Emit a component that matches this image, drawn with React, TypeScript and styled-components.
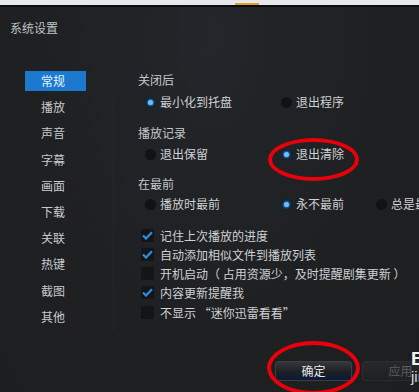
import React from "react";
import styled, { createGlobalStyle } from "styled-components";

const Global = createGlobalStyle`
  html, body { margin: 0; padding: 0; background: #1e2022; }
  body { font-family: "Noto Sans CJK SC", "Noto Sans", sans-serif; }
`;

const Page = styled.div`
  position: relative;
  width: 419px;
  height: 392px;
  overflow: hidden;
  background: radial-gradient(ellipse at 50% 10%, #23262a 0%, #1e2022 60%, #1c1e20 100%);
  color: #d2d2d2;
  font-size: 12px;
`;

const TopStrip = styled.div`
  height: 5px;
  background: #e6e8ec;
  display: flex;
  align-items: flex-end;
`;

const Accent = styled.div`
  margin-left: 235px;
  width: 24px;
  height: 2px;
  background: #e0a020;
`;

const EdgeLine = styled.div`
  height: 2px;
  background: #0c0d0e;
`;

const TitleBar = styled.div`
  height: 42px;
  padding-left: 10px;
  display: flex;
  align-items: flex-start;
  padding-top: 13px;
  box-sizing: border-box;
  color: #bfc3c7;
  font-size: 12px;
  line-height: 16px;
`;

const Body = styled.div`
  display: flex;
  padding-top: 22px;
  height: 280px;
`;

const Sidebar = styled.div`
  flex: none;
  width: 88px;
  padding-left: 25px;
  display: flex;
  flex-direction: column;
  gap: 6.2px;
  border-right: 1px solid #25282b;
  margin-bottom: 20px;
`;

const NavItem = styled.div<{ $active?: boolean }>`
  width: 61px;
  height: 20px;
  box-sizing: border-box;
  padding-left: 16px;
  line-height: 20px;
  color: ${(p) => (p.$active ? "#e8f2fc" : "#c8cacc")};
  background: ${(p) => (p.$active ? "#1b7ad0" : "transparent")};
`;

const Content = styled.div`
  flex: 1;
  min-width: 0;
  padding-left: 24px;
  display: flex;
  flex-direction: column;
`;

const SectionLabel = styled.div<{ $mt: number }>`
  margin-top: ${(p) => p.$mt}px;
  height: 16px;
  line-height: 16px;
  color: #c6c8ca;
`;

const RadioRow = styled.div<{ $mt: number }>`
  margin-top: ${(p) => p.$mt}px;
  padding-left: 7px;
  display: grid;
  grid-template-columns: 136px 95px 100px;
  height: 16px;
  white-space: nowrap;
`;

const RadioOption = styled.div`
  display: flex;
  align-items: center;
  gap: 4px;
  color: #cfd1d3;
  line-height: 16px;
`;

const RadioDot = styled.span<{ $on?: boolean }>`
  width: 11px;
  height: 11px;
  border-radius: 50%;
  background: #111214;
  box-sizing: border-box;
  display: flex;
  align-items: center;
  justify-content: center;
  flex: none;
  &::after {
    content: "";
    display: ${(p) => (p.$on ? "block" : "none")};
    width: 5px;
    height: 5px;
    border-radius: 50%;
    background: #6cc0ff;
    box-shadow: 0 0 3px 1px #2b8de8;
  }
`;

const CheckList = styled.div`
  margin-top: 15px;
  display: flex;
  flex-direction: column;
  gap: 3.3px;
  padding-left: 3px;
`;

const CheckRow = styled.div`
  display: flex;
  align-items: center;
  gap: 6px;
  height: 16px;
  color: #cfd1d3;
  white-space: nowrap;
`;

const Box = styled.span`
  width: 13px;
  height: 13px;
  background: #141517;
  display: flex;
  align-items: center;
  justify-content: center;
  flex: none;
`;

const Footer = styled.div`
  display: flex;
  gap: 10px;
  padding-left: 275px;
  padding-top: 10px;
`;

const Button = styled.div<{ $disabled?: boolean }>`
  width: 77px;
  height: 20px;
  flex: none;
  box-sizing: border-box;
  border: 1px solid ${(p) => (p.$disabled ? "#2a2c2e" : "#3b3e42")};
  border-radius: 3px;
  text-align: center;
  line-height: 18px;
  font-size: 12px;
  color: ${(p) => (p.$disabled ? "#5a5d60" : "#e6e8ea")};
  background: ${(p) =>
    p.$disabled
      ? "linear-gradient(#262829, #1e2021)"
      : "linear-gradient(#34373b 0%, #1c1f24 55%, #0c1a36 100%)"};
`;

const Annotation = styled.div<{ $x: number; $y: number; $w: number; $h: number }>`
  position: absolute;
  left: ${(p) => p.$x}px;
  top: ${(p) => p.$y}px;
  width: ${(p) => p.$w}px;
  height: ${(p) => p.$h}px;
  box-sizing: border-box;
  border: 4px solid #e8000a;
  border-radius: 50%;
  pointer-events: none;
`;

const Watermark = styled.div`
  position: absolute;
  left: 411px;
  top: 349px;
  color: #f2f2f2;
  font-family: "Liberation Sans", sans-serif;
  line-height: 1;
  display: flex;
  flex-direction: column;
`;

const WmBig = styled.span`
  font-size: 19px;
  font-weight: bold;
`;

const WmSmall = styled.span`
  font-size: 15px;
  color: #d8d8d8;
  margin-top: 1px;
`;

const Check = () => (
  <svg width="11" height="9" viewBox="0 0 11 9">
    <path d="M1 4.5 L4 7.5 L10 1.2" fill="none" stroke="#2a90e6" strokeWidth="2.2" />
  </svg>
);

const nav = ["常规", "播放", "声音", "字幕", "画面", "下载", "关联", "热键", "截图", "其他"];

const checks: [boolean, string][] = [
  [true, "记住上次播放的进度"],
  [true, "自动添加相似文件到播放列表"],
  [false, "开机启动（ 占用资源少，及时提醒剧集更新 ）"],
  [true, "内容更新提醒我"],
  [false, "不显示 “迷你迅雷看看”"],
];

export default function App() {
  return (
    <Page>
      <Global />
      <TopStrip>
        <Accent />
      </TopStrip>
      <EdgeLine />
      <TitleBar>系统设置</TitleBar>
      <Body>
        <Sidebar>
          {nav.map((n, i) => (
            <NavItem key={n} $active={i === 0}>
              {n}
            </NavItem>
          ))}
        </Sidebar>
        <Content>
          <SectionLabel $mt={1}>关闭后</SectionLabel>
          <RadioRow $mt={6}>
            <RadioOption>
              <RadioDot $on />
              最小化到托盘
            </RadioOption>
            <RadioOption>
              <RadioDot />
              退出程序
            </RadioOption>
          </RadioRow>
          <SectionLabel $mt={15}>播放记录</SectionLabel>
          <RadioRow $mt={5}>
            <RadioOption>
              <RadioDot />
              退出保留
            </RadioOption>
            <RadioOption>
              <RadioDot $on />
              退出清除
            </RadioOption>
          </RadioRow>
          <SectionLabel $mt={14}>在最前</SectionLabel>
          <RadioRow $mt={4}>
            <RadioOption>
              <RadioDot />
              播放时最前
            </RadioOption>
            <RadioOption>
              <RadioDot $on />
              永不最前
            </RadioOption>
            <RadioOption>
              <RadioDot />
              总是最前
            </RadioOption>
          </RadioRow>
          <CheckList>
            {checks.map(([on, t]) => (
              <CheckRow key={t}>
                <Box>{on && <Check />}</Box>
                {t}
              </CheckRow>
            ))}
          </CheckList>
        </Content>
      </Body>
      <Footer>
        <Button>确定</Button>
        <Button $disabled>应用</Button>
      </Footer>
      <Annotation $x={268} $y={138} $w={91} $h={43} />
      <Annotation $x={267} $y={341} $w={93} $h={54} />
      <Watermark>
        <WmBig>Bai</WmBig>
        <WmSmall>jingyan</WmSmall>
      </Watermark>
    </Page>
  );
}
